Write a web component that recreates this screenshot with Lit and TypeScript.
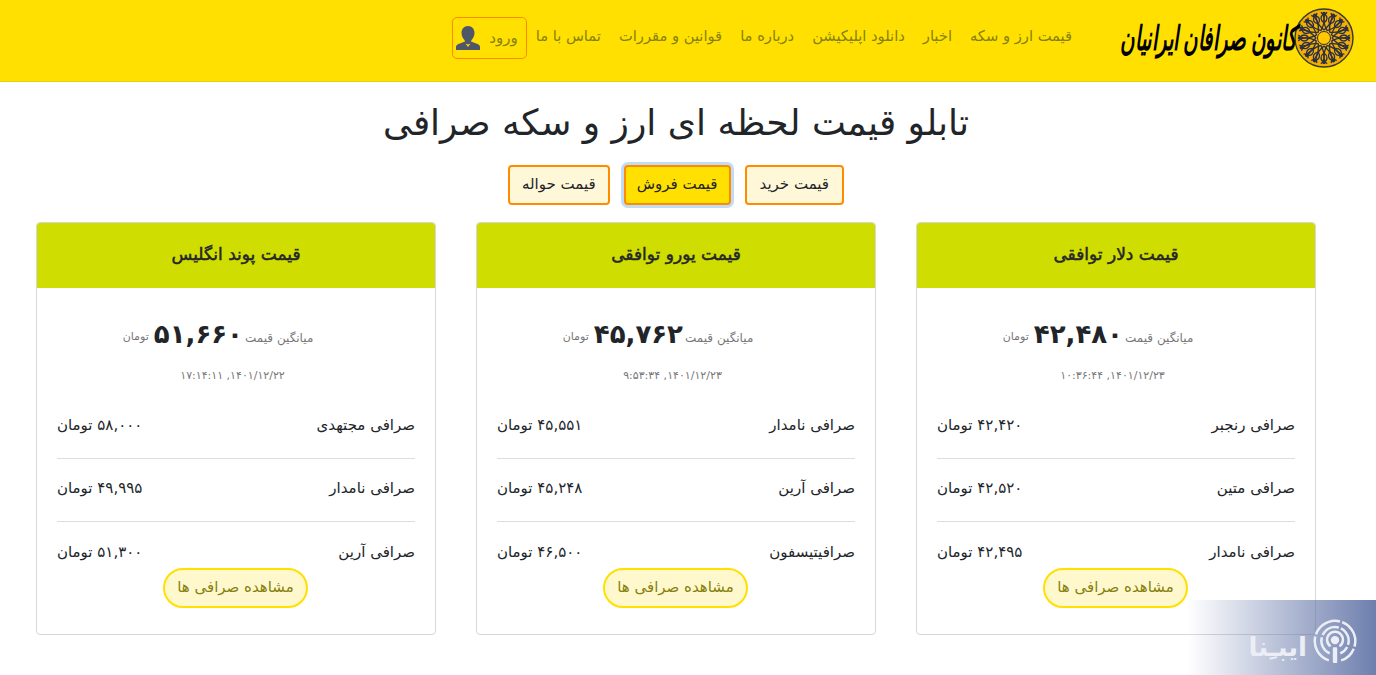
import { LitElement, html, css, svg } from "lit";
import { customElement } from "lit/decorators.js";

const cards = [
  { t: "قیمت دلار توافقی", avg: "۴۲,۴۸۰", date: "۱۴۰۱/۱۲/۲۳, ۱۰:۳۶:۴۴", rows: [["صرافی رنجبر", "۴۲,۴۲۰"], ["صرافی متین", "۴۲,۵۲۰"], ["صرافی نامدار", "۴۲,۴۹۵"]] },
  { t: "قیمت یورو توافقی", avg: "۴۵,۷۶۲", date: "۱۴۰۱/۱۲/۲۳, ۹:۵۳:۳۴", rows: [["صرافی نامدار", "۴۵,۵۵۱"], ["صرافی آرین", "۴۵,۲۴۸"], ["صرافیتیسفون", "۴۶,۵۰۰"]] },
  { t: "قیمت پوند انگلیس", avg: "۵۱,۶۶۰", date: "۱۴۰۱/۱۲/۲۲, ۱۷:۱۴:۱۱", rows: [["صرافی مجتهدی", "۵۸,۰۰۰"], ["صرافی نامدار", "۴۹,۹۹۵"], ["صرافی آرین", "۵۱,۳۰۰"]] },
];
const nav = ["قیمت ارز و سکه", "اخبار", "دانلود اپلیکیشن", "درباره ما", "قوانین و مقررات", "تماس با ما"];

const rosette = () => {
  const petals = [];
  for (let i = 0; i < 16; i++) {
    const a = (i * 360) / 16;
    petals.push(svg`<g transform="rotate(${a} 30 30)">
      <path d="M30 22 C23 16 20 11 23 5 M30 22 C37 16 40 11 37 5 M30 15 C26 12 26 8 30 6 C34 8 34 12 30 15" fill="none" stroke="#2c2f45" stroke-width="1.3"/>
      <circle cx="30" cy="5.500" r="1.800" fill="#2c2f45"/>
    </g>`);
  }
  return html`<svg class="rosette" viewBox="0 0 60 60" width="60" height="60" aria-hidden="true">
    <circle cx="30" cy="30" r="29" fill="#f2b000" stroke="#3a3a2a" stroke-width="1.400"/>
    ${petals}
    <circle cx="30" cy="30" r="6.500" fill="#ffc800" stroke="#2c2f45" stroke-width="1"/>
  </svg>`;
};

@customElement("app-root")
export class AppRoot extends LitElement {
  static styles = css`
    :host { display: block; height: 675px; overflow: hidden; position: relative; background: #fff; color: #212529;
      font-family: "DejaVu Sans", sans-serif; direction: rtl; font-size: 15px; }
    * { box-sizing: border-box; }
    .nav { height: 82px; background: #ffe000; border-bottom: 1px solid #e6d200; display: flex; align-items: flex-start; padding: 0 22px 0 0; }
    .logo { display: flex; align-items: center; width: 233px; margin-top: 8px; flex: none; }
    .rosette { flex: none; }
    .logo-text { font-family: "Liberation Serif", "DejaVu Serif", serif; font-weight: 700; font-style: italic; font-size: 34px; color: #000; white-space: nowrap; display: inline-block; transform: scaleX(.58); transform-origin: right center; margin-right: -2px; }
    .links { display: flex; align-items: flex-start; margin-top: 17px; margin-right: 49px; }
    .links a { color: #85800f; font-size: 14.7px; line-height: 38px; margin-left: 18px; white-space: nowrap; }
    .links a:nth-child(6) { margin-left: 9px; }
    .login { display: flex; align-items: center; gap: 9px; height: 42px; padding: 0 8px 0 3px; border: 1px solid #ff8c00; border-radius: 5px; color: #85800f; font-size: 15px; }
    main { padding: 0 60px 0 36px; }
    h1 { margin: 17px 0 0; height: 47px; font-size: 36px; line-height: 47px; font-weight: 400; text-align: center; color: #212529; }
    .btns { display: flex; justify-content: center; gap: 14px; margin-top: 19px; }
    .btn { height: 40px; padding: 0 12px 3px; display: flex; align-items: center; font-size: 15px; border: 2px solid #ff8c00; border-radius: 4px; background: #fff8d8; color: #212529; }
    .btn.buy { padding: 0 13px 3px; }
    .btn.on { padding: 0 11px 3px; background: #ffe000; box-shadow: 0 0 0 3px #c0dcf8; }
    .grid { display: grid; grid-template-columns: repeat(3, 400px); gap: 40px; margin-top: 17px; }
    .card { height: 413px; border: 1px solid #d8d8d8; border-radius: 4px; position: relative; }
    .head { height: 65px; padding-bottom: 4px; background: #d0dd00; display: flex; align-items: center; justify-content: center; font-size: 17px; -webkit-text-stroke: .5px #23262a; border-radius: 3px 3px 0 0; color: #23262a; }
    .avg { display: flex; justify-content: center; align-items: center; gap: 5px; margin-top: 27px; padding-right: 36px; height: 38px; color: #777; font-size: 12px; }
    .avg .l { margin-top: 8px; margin-left: -3px; }
    .avg b { font-size: 26px; color: #212529; line-height: 38px; }
    .avg .u { margin-top: 4px; font-size: 11px; }
    .date { text-align: center; color: #777; font-size: 11px; margin-top: 16px; height: 17px; padding-right: 7px; }
    .rows { padding: 0 20px; margin-top: 10px; }
    .row { height: 63px; padding-bottom: 4px; display: flex; justify-content: space-between; align-items: center; border-bottom: 1px solid #ddd; font-size: 15px; }
    .row:last-child { border-bottom: 0; }
    .more { position: absolute; left: 126px; bottom: 26px; width: 145px; height: 40px; padding-bottom: 2px; display: flex; align-items: center; justify-content: center; font-size: 15px; color: #85800f; background: #fff8cc; border: 2px solid #ffe000; border-radius: 20px; }
    .wm { position: absolute; right: 0; bottom: 0; width: 188px; height: 75px; background: linear-gradient(90deg, rgba(94,113,165,0) 0%, rgba(94,113,165,.9) 100%); display: flex; align-items: center; justify-content: flex-start; gap: 6px; padding: 6px 19px 0 0; color: #eceef5; }
    .wm svg { flex: none; }
    .wm span { font-size: 26px; font-weight: 700; margin-top: 12px; }
  `;

  render() {
    return html`
      <div class="nav">
        <div class="logo">${rosette()}<span class="logo-text">کانون صرافان ایرانیان</span></div>
        <div class="links">
          ${nav.map((n) => html`<a>${n}</a>`)}
          <div class="login"><span>ورود</span>
            <svg width="24" height="26" viewBox="0 0 24 26" aria-hidden="true"><path fill="#4f5668" d="M12 1c4 0 6.500 3 6.500 7 0 3-1.500 5.500-3 7l-.5 1.500 6.500 2.500c1.500.6 2.500 1.500 2.500 3v3H0v-3c0-1.500 1-2.400 2.500-3L9 16.500 8.500 15c-1.500-1.500-3-4-3-7 0-4 2.500-7 6.500-7z"/><path fill="#ffe000" d="M9.500 18.500 12 22l2.500-3.500-2.500 1z"/></svg>
          </div>
        </div>
      </div>
      <main>
        <h1>تابلو قیمت لحظه ای ارز و سکه صرافی</h1>
        <div class="btns">
          <div class="btn buy">قیمت خرید</div>
          <div class="btn on">قیمت فروش</div>
          <div class="btn">قیمت حواله</div>
        </div>
        <div class="grid">
          ${cards.map((c) => html`<div class="card">
            <div class="head">${c.t}</div>
            <div class="avg"><span class="l">میانگین قیمت</span><b>${c.avg}</b><span class="u">تومان</span></div>
            <div class="date">${c.date}</div>
            <div class="rows">
              ${c.rows.map((r) => html`<div class="row"><span>${r[0]}</span><span>${r[1]} تومان</span></div>`)}
            </div>
            <div class="more">مشاهده صرافی ها</div>
          </div>`)}
        </div>
      </main>
      <div class="wm">
        <svg width="44" height="48" viewBox="0 0 50 52" fill="none" stroke="#eceef5" stroke-width="2.800" aria-hidden="true">
          <path d="M18 48A23 23 0 1 1 32 48" stroke-dasharray="34 2.500"/>
          <path d="M19 40A15.500 15.500 0 1 1 31 40" stroke-dasharray="22 2.500"/>
          <path d="M20 32A9 9 0 1 1 30 32"/>
          <circle cx="25" cy="25" r="4.800" fill="#eceef5" stroke="none"/>
          <rect x="22.500" y="33" width="5" height="18" rx="1" fill="#eceef5" stroke="none"/>
        </svg>
        <span>ایبـِنا</span>
      </div>
    `;
  }
}
